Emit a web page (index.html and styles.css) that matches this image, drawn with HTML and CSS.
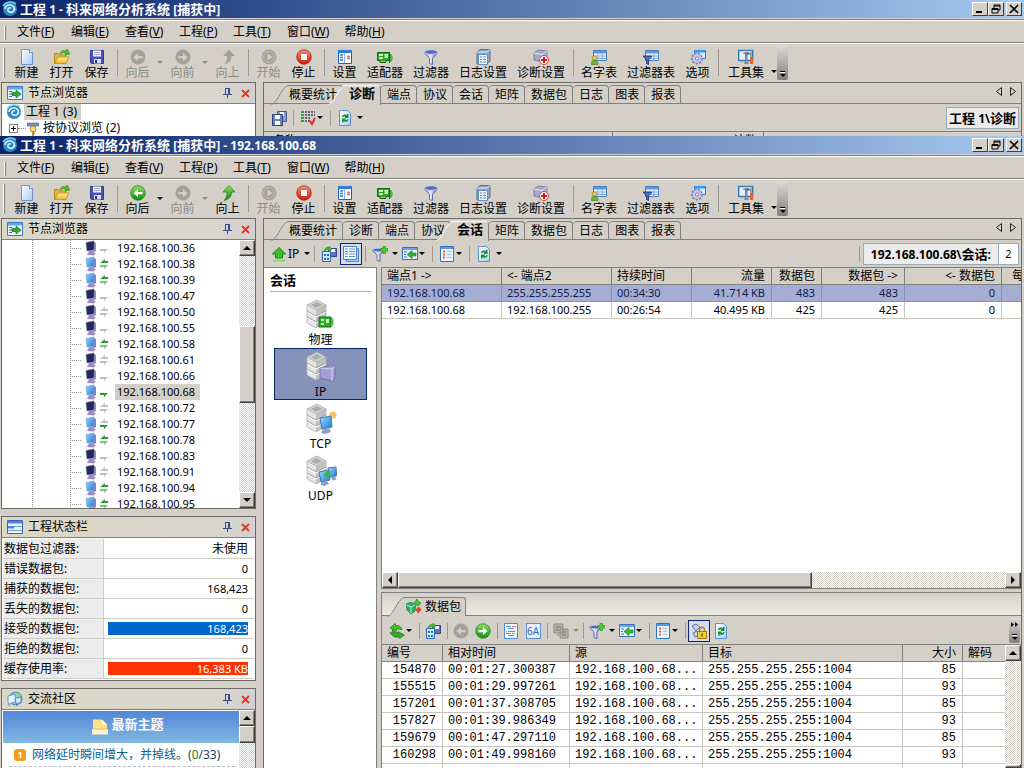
FILE: index.html
```html
<!DOCTYPE html>
<html lang="zh-CN">
<head>
<meta charset="utf-8">
<title>工程 1 - 科来网络分析系统</title>
<link rel="stylesheet" href="styles.css">
</head>
<body>
<svg class="defs" width="0" height="0" aria-hidden="true">
  <defs>
    <linearGradient id="gBlue" x2="1" y2="1"><stop offset="0" stop-color="#9fdcff"/><stop offset="1" stop-color="#1a78d0"/></linearGradient>
    <linearGradient id="gGreen" x2="0" y2="1"><stop offset="0" stop-color="#8fe060"/><stop offset="1" stop-color="#108a10"/></linearGradient>
    <linearGradient id="gPage" x2="1" y2="1"><stop offset="0" stop-color="#fff"/><stop offset="1" stop-color="#a9cdf5"/></linearGradient>
    <linearGradient id="gGold" x2="0" y2="1"><stop offset="0" stop-color="#fff3a0"/><stop offset="1" stop-color="#f0b820"/></linearGradient>
    <linearGradient id="gFun" x2="1" y2="0"><stop offset="0" stop-color="#6f86c4"/><stop offset=".45" stop-color="#eef2ff"/><stop offset="1" stop-color="#4a5fa8"/></linearGradient>
    <linearGradient id="gRed" x2="0" y2="1"><stop offset="0" stop-color="#f98a70"/><stop offset="1" stop-color="#c81e08"/></linearGradient>
  </defs>
  <symbol id="logo" viewBox="0 0 16 16"><circle cx="8" cy="8" r="7" fill="#2b86c8"/><path d="M3 8c0-4 6-6 9-2 2 4-3 7-6 4-1-2 1-4 3-3" fill="none" stroke="#d8f4ff" stroke-width="1.6"/><path d="M1 5C4 0 11 0 14 3" fill="none" stroke="#7ed0f5" stroke-width="1.4"/></symbol>
  <symbol id="new" viewBox="0 0 16 16"><path d="M2.500.5h8l3 3v12h-11z" fill="url(#gPage)" stroke="#6f93c8"/><path d="M10.500.5v3h3" fill="#fff" stroke="#6f93c8"/></symbol>
  <symbol id="open" viewBox="0 0 16 16"><path d="M.5 14.500v-10h4l1 1.500h6v8.500z" fill="#e6b93c" stroke="#b88a20"/><path d="M1 14.500l3-6.500h11l-3 6.500z" fill="url(#gGold)" stroke="#c79a28"/><path d="M6 5c1-4 4-4 6-3l1-2 3 5-5 1 .5-2c-2-1-3-.5-5.500 1z" fill="#4dbb25" stroke="#2a8a18" stroke-width=".6"/></symbol>
  <symbol id="save" viewBox="0 0 16 16"><path d="M1.500 1.500h13v13h-12l-1-1z" fill="#4a54b8" stroke="#323a90"/><path d="M4 1.500h8v6H4z" fill="#f6f7ff"/><path d="M5 3.500h6M5 5.500h6" stroke="#9aa4d8"/><path d="M5 10h7v4.500H5z" fill="#d8def4"/><path d="M6 11h2v3H6z" fill="#323a90"/></symbol>
  <symbol id="back" viewBox="0 0 16 16"><circle cx="8" cy="8" r="7.300" fill="url(#gGreen)" stroke="#2d8a28" stroke-width=".8"/><path d="M12.500 7H8V4L3.500 8.200 8 12V9.300h4.500z" fill="#fff"/></symbol>
  <symbol id="fwd" viewBox="0 0 16 16"><circle cx="8" cy="8" r="7.300" fill="url(#gGreen)" stroke="#2d8a28" stroke-width=".8"/><path d="M3.500 7H8V4l4.500 4.200L8 12V9.300H3.500z" fill="#fff"/></symbol>
  <symbol id="backoff" viewBox="0 0 16 16"><circle cx="8" cy="8" r="7.500" fill="#a3a19c"/><path d="M12.500 7H8V4L3.500 8.200 8 12V9.300h4.500z" fill="#d4d0c8"/></symbol>
  <symbol id="fwdoff" viewBox="0 0 16 16"><circle cx="8" cy="8" r="7.500" fill="#a3a19c"/><path d="M3.500 7H8V4l4.500 4.200L8 12V9.300H3.500z" fill="#d4d0c8"/></symbol>
  <symbol id="upon" viewBox="0 0 16 16"><path d="M9 .5l6 6.500h-3.500c0 4-1.500 7-7.500 8.500 3-3 3-5 3-8.500H3z" fill="url(#gGreen)" stroke="#187a18" stroke-width=".7"/></symbol>
  <symbol id="upoff" viewBox="0 0 16 16"><path d="M9 .5l6 6.500h-3.500c0 4-1.500 7-7.500 8.500 3-3 3-5 3-8.500H3z" fill="#a3a19c"/></symbol>
  <symbol id="startoff" viewBox="0 0 16 16"><circle cx="8" cy="8" r="7.500" fill="#a3a19c"/><circle cx="8" cy="8" r="5.500" fill="none" stroke="#c4c1ba"/><path d="M6.500 4.500v7l5-3.500z" fill="#d4d0c8"/></symbol>
  <symbol id="stop" viewBox="0 0 16 16"><circle cx="8" cy="8" r="7.300" fill="url(#gRed)" stroke="#b83018" stroke-width=".8"/><path d="M5 5h6v6H5z" fill="#fff"/></symbol>
  <symbol id="settings" viewBox="0 0 16 16"><path d="M1.500 1.500h13v13h-13z" fill="#fff" stroke="#1c5fc0"/><path d="M1 1h14v3H1z" fill="#2e7be0"/><path d="M3 6h3M3 8.500h3M3 11h3" stroke="#2e7be0" stroke-width="1.500"/><path d="M7.500 4v10" stroke="#8ab4ea"/><path d="M10 6h3v5h-3z" fill="#e8ccd8"/><path d="M10.500 7l2 3M12.500 7l-2 3" stroke="#d05070"/></symbol>
  <symbol id="adapter" viewBox="0 0 16 16"><path d="M.5 3.500h12v8H.5z" fill="#27a32d" stroke="#0d6d18"/><path d="M2 5h4v2H2zM2 8h4v2H2zM7.500 5h3.500v4H7.500z" fill="#d8f5a8"/><path d="M12.500 3v11M3 11.500v2h6v-2" stroke="#0d6d18" fill="#c8b840"/><path d="M13 5c3 1 3 6 0 8z" fill="#58c848" stroke="#187a18" stroke-width=".6"/></symbol>
  <symbol id="filter" viewBox="0 0 16 16"><path d="M1.500 3c0 2 4 4.500 5 6.500v5l3 1v-6c1-2 5-4.500 5-6.500z" fill="url(#gFun)" stroke="#46569a" stroke-width=".8"/><ellipse cx="8" cy="3" rx="6.500" ry="2.200" fill="#5368b8" stroke="#c8d0f0" stroke-width=".9"/></symbol>
  <symbol id="log" viewBox="0 0 16 16"><path d="M2 3l3-2.500h10V12l-3 3H2z" fill="#91a3bd" stroke="#5d7190"/><path d="M2 3h10l3-2.500" fill="none" stroke="#e8eef8"/><path d="M3.500 5.500h9v10h-9z" fill="#f1f8ff" stroke="#5a90c8"/><path d="M5 8h2M8 8h3M5 10.500h2M8 10.500h3M5 13h2M8 13h3" stroke="#3a8ad0"/></symbol>
  <symbol id="diag" viewBox="0 0 16 16"><path d="M1 4l4-3 9 1v8l-5 3-8-2z" fill="#a9acc8" stroke="#7c80a4"/><path d="M1 4l8 1.500L14 2M9 5.500V13" stroke="#e4e6f4" fill="none"/><circle cx="11" cy="11" r="4.500" fill="#fff" stroke="#d84040"/><path d="M11 8v6M8 11h6" stroke="#d81818" stroke-width="2"/></symbol>
  <symbol id="names" viewBox="0 0 16 16"><path d="M2.500 1.500h13v10h-13z" fill="#eef6ff" stroke="#4a80c0"/><path d="M3 2h12v2.500H3z" fill="#5c97e0"/><path d="M3 7h12M3 9.500h12M7 4.500v7M11 4.500v7" stroke="#78a8dc"/><circle cx="3.500" cy="9" r="2.300" fill="#e8c860" stroke="#9a7a20" stroke-width=".6"/><path d="M0 15.500c0-6 7-6 7 0z" fill="#6cb432" stroke="#3a7a18" stroke-width=".6"/></symbol>
  <symbol id="ftable" viewBox="0 0 16 16"><path d="M2.500 1.500h13v10h-13z" fill="#eef6ff" stroke="#4a80c0"/><path d="M3 2h12v2.500H3z" fill="#5c97e0"/><path d="M3 7h12M3 9.500h12M11 4.500v7" stroke="#78a8dc"/><path d="M0 7h9l-3.500 4v4.500l-2-1V11z" fill="#4c68c8" stroke="#20306e" stroke-width=".8"/></symbol>
  <symbol id="options" viewBox="0 0 16 16"><path d="M4.500 1.500h11v8h-11z" fill="#d8ecff" stroke="#2e7be0"/><path d="M5 1h10v2.500H5z" fill="#2e9af0"/><circle cx="7" cy="9.500" r="5" fill="#c9c4e6" stroke="#7c78b0" stroke-width="1.800" stroke-dasharray="2.200 1.200"/><circle cx="7" cy="9.500" r="4.300" fill="#c9c4e6"/><circle cx="7" cy="9.500" r="1.700" fill="#fff" stroke="#7c78b0"/></symbol>
  <symbol id="tools" viewBox="0 0 16 16"><path d="M.7 1.500h14v10H.7z" fill="#e4f2ff" stroke="#3a78b0" stroke-width="1.400"/><path d="M6 13h5v2H6z" fill="#8aa"/><path d="M4 4l6-1 3 2-3 1z" fill="#5d6f7e"/><path d="M7 5h2.500v10H7z" fill="#788898"/><path d="M13 3v5" stroke="#789" stroke-width="1.500"/><path d="M12 8h3v7h-3z" fill="#e8642c"/></symbol>
  <symbol id="nodes" viewBox="0 0 16 16"><path d="M.5 1.500h15v13H.5z" fill="#eef7ff" stroke="#3a78c8"/><path d="M1 2h14v2.500H1z" fill="#5ca8ee"/><path d="M2 6.500h3M2 9h3M2 11.500h3" stroke="#2e6fb8"/><path d="M5 7.500h4V5l5 4-5 4v-2.500H5z" fill="#35a83a" stroke="#12701a" stroke-width=".7"/></symbol>
  <symbol id="status" viewBox="0 0 16 16"><path d="M.5 1.500h15v13H.5z" fill="#eef6ff" stroke="#3466b8"/><path d="M1 2h14v2.500H1zM1 7h6v2.500H1z" fill="#4e86de"/><path d="M1 11.500h14M7 7.500h8" stroke="#6f9fe2"/></symbol>
  <symbol id="forum" viewBox="0 0 16 16"><circle cx="8.500" cy="7.500" r="6.500" fill="#93d49a" stroke="#4a90b8"/><path d="M1 5l7-2 1 8-5 1-2 3v-3H1z" fill="#e8f6ff" stroke="#5a9cc8"/><path d="M8 7l6-1v6h-3l-1 3-1-3z" fill="#cfe8ff" stroke="#4a88c8"/></symbol>
  <symbol id="pin" viewBox="0 0 9 10"><path d="M2.500 1v5M6.500 1v5M2 .5h5M0 6.500h9M4.500 7v3M5.500 1v5" stroke="#3b4e8a" fill="none"/></symbol>
  <symbol id="close" viewBox="0 0 9 9"><path d="M1 1l7 7M8 1l-7 7" stroke="#dc3a14" stroke-width="1.800"/></symbol>
  <symbol id="copyset" viewBox="0 0 16 16"><path d="M6.500 1.500h9v10h-9z" fill="#8a9ccc" stroke="#465a98"/><path d="M9 2h4v4H9z" fill="#fff"/><path d="M1.500 4.500h10v11h-10z" fill="#6d80b8" stroke="#2e4080"/><path d="M4 5h5v4H4zM4 11h5v4H4z" fill="#f4f8ff"/></symbol>
  <symbol id="checks" viewBox="0 0 16 16"><path d="M1 2h3M1 5h3M1 8h3M1 11h3" stroke="#3a9a4a" stroke-width="1.800"/><path d="M5 2h10M5 5h10M5 8h6M5 11h4" stroke="#446" stroke-width="1.300" stroke-dasharray="2 1"/><path d="M9 10l3 4 3-6" fill="none" stroke="#d83030" stroke-width="2"/></symbol>
  <symbol id="refresh" viewBox="0 0 16 16"><path d="M2.500.5h8l3 3v12h-11z" fill="url(#gPage)" stroke="#5f8fd0"/><path d="M5 7c0-3 4-3 5-1.500V4h1.500v4H8V6.800c-1-.8-1.500-.5-1.700.2zM11.500 9c0 3-4 3.500-5 2v1.500H5v-4h3.500v1.200c1 .8 1.500.3 1.700-.5z" fill="#12962a"/></symbol>
  <symbol id="upgreen" viewBox="0 0 16 16"><path d="M8 1.500l6.500 6.500h-3v4h-7V8h-3z" fill="#3fbf2c" stroke="#18801a"/><path d="M2 14.500h12" stroke="#7fcf70" stroke-width="1.500"/></symbol>
  <symbol id="export" viewBox="0 0 16 16"><path d="M7.500 2.500h8v8h-8z" fill="#6270c0" stroke="#39458e"/><path d="M10 3h4v3h-4z" fill="#fff"/><path d="M1.500 5.500h8v10h-8z" fill="#d4eaff" stroke="#2c68b8"/><path d="M3 8h2v2H3zM6 8h2v2H6zM3 12h2v2H3zM6 12h2v2H6z" fill="#2c68b8"/><path d="M3 5c1-4 4-4 5-3.500V0l3 3-3 3V4C6 3.500 5 4 3 5z" fill="#42b830" stroke="#1c801c" stroke-width=".5"/></symbol>
  <symbol id="list" viewBox="0 0 16 16"><path d="M3.500 2.500h12v13h-12z" fill="#b8d4f4" stroke="#4a80c8"/><path d="M.5.500h13v13H.5z" fill="#f8fcff" stroke="#4a80c8"/><path d="M2 3h10M2 5.500h10M2 8h10M2 10.500h10" stroke="#5b90d8"/><path d="M5.500 2v10" stroke="#f8fcff"/></symbol>
  <symbol id="fplus" viewBox="0 0 16 16"><path d="M.5 4c0 2 4 3.500 4.500 5v5.500l3 1V9c.5-1.500 4-3 4-5z" fill="url(#gFun)" stroke="#46569a" stroke-width=".8"/><ellipse cx="6.500" cy="4" rx="5.800" ry="1.800" fill="#5368b8" stroke="#c8d0f0" stroke-width=".8"/><path d="M11 0h2.500v2.500H16V5h-2.500v2.500H11V5H8.500V2.500H11z" fill="#4ccc2c" stroke="#1c8a1c" stroke-width=".6"/></symbol>
  <symbol id="locate" viewBox="0 0 16 16"><path d="M.5 1.500h15v12H.5z" fill="#eaf4ff" stroke="#3a6fb8"/><path d="M1 2h14v2H1z" fill="#6aa4e8"/><path d="M2 6h3M2 8.500h2M2 11h3" stroke="#2e6fb8"/><path d="M14 7h-4V4.500L5 8.500l5 4V10h4z" fill="#35b83a" stroke="#12701a" stroke-width=".6"/></symbol>
  <symbol id="columns" viewBox="0 0 16 16"><path d="M1.500.5h13v15h-13z" fill="#f4f9ff" stroke="#2f6fc8"/><path d="M2 1h12v2H2z" fill="#5c97e0"/><path d="M4 5.500h2M4 8.500h2M4 11.500h2" stroke="#e86040" stroke-width="1.800"/><path d="M7.500 5.500h5M7.500 8.500h5M7.500 11.500h5" stroke="#a8c8ec" stroke-width="1.500"/></symbol>
  <symbol id="swap" viewBox="0 0 16 16"><path d="M1 5l5-4.500 1 2c3 0 5 1 6 4l-3-.5-3 0 .5 2z" fill="#4cc030" stroke="#157a18" stroke-width=".7"/><path d="M15.500 12l-5 3.500-.5-1.500c-4 1-7-1-9-4.500l3 .5-1-3 6 3 0-1.500z" fill="#38a828" stroke="#157a18" stroke-width=".7"/></symbol>
  <symbol id="decode" viewBox="0 0 16 16"><path d="M1.500.5h13v15h-13z" fill="#f4f9ff" stroke="#4a88d8"/><path d="M3 3.500h5M5 5.500h6M5 8.500h7M3 10.500h5M5 12.500h6" stroke="#5a8ad0"/><path d="M9 3.500h4M3 8.500h1M9 10.500h3" stroke="#e07080"/></symbol>
  <symbol id="hexoff" viewBox="0 0 16 16"><path d="M1 1h9v9H1zM7 6h8v9H7z" fill="#b5b2ac" stroke="#8e8c86"/><path d="M3 4h5M3 7h3M9 9h4M9 12h4M4 12h2" stroke="#77756f"/></symbol>
  <symbol id="lock" viewBox="0 0 16 16"><path d="M1 3l4-2 4 3-4 4zM2 10l4-2 2 4-4 2z" fill="#c9d2ea" stroke="#6070a8"/><path d="M8.500 9V6.500c0-3 5-3 5 0V9" fill="none" stroke="#a88a18" stroke-width="1.500"/><path d="M6.500 8.500h9v7h-9z" fill="#f4cf38" stroke="#a07c10"/><path d="M11 10.500v3" stroke="#6a4e08" stroke-width="1.500"/></symbol>
  <symbol id="packets" viewBox="0 0 16 16"><path d="M8 4l3-4 1.500 2.500L15 4l-3 3z" fill="#48c038" stroke="#17801c" stroke-width=".6"/><path d="M0 5l5-2 5 3-1 6-4 3-4-4z" fill="#2fae5c" stroke="#17703c" stroke-width=".6"/><path d="M1 6l4 2 4-2M5 8v6" stroke="#b6f0ff" fill="none"/><path d="M12.500 7.500l3 3-3 4-3-3.500z" fill="#e8402c"/></symbol>
  <symbol id="proto" viewBox="0 0 12 16"><path d="M0 3h12v3H0z" fill="#7795cc" stroke="#405c98" stroke-width=".6"/><circle cx="6" cy="9" r="3" fill="#f8e070" stroke="#a88820"/><path d="M6 11v5M6 13.500h2" stroke="#a88820" stroke-width="1.600"/></symbol>
  <symbol id="pcon" viewBox="0 0 12 16"><path d="M9 2l2 1v8l-3 2z" fill="#8f7fc0"/><path d="M1 2.500l8-1.500v9l-7 1z" fill="url(#gBlue)" stroke="#5f9fd8" stroke-width=".6"/><path d="M4 11l4-1 1 3h2l-2 2.500-7-.5z" fill="#a08cc8"/></symbol>
  <symbol id="pcoff" viewBox="0 0 12 16"><path d="M9 2l2 1v8l-3 2z" fill="#8f8fc0"/><path d="M1 2.500l8-1.500v9l-7 1z" fill="#26265e" stroke="#6a70a8" stroke-width=".6"/><path d="M4 11l4-1 1 3h2l-2 2.500-7-.5z" fill="#a08cc8"/></symbol>
  <symbol id="au" viewBox="0 0 10 12"><path d="M1 5l5-4v2h3v2z"/></symbol>
  <symbol id="ad" viewBox="0 0 10 12"><path d="M9 1L5 5V3H1V1z"/></symbol>
  <symbol id="server" viewBox="0 0 22 30"><path d="M1 6l9 5v18l-9-5z" fill="#e6e6e6"/><path d="M10 11l10-5v18l-10 5z" fill="#c0c0c0"/><path d="M1 6l10-5 9 5-10 5z" fill="#d4d4d4" stroke="#aaa" stroke-width=".8"/><path d="M5 6l6-3 5 3-6 3z" fill="#ababab"/><path d="M1 12l9 5 10-5M1 18l9 5 10-5" fill="none" stroke="#999"/><path d="M1 13l9 5 10-5M1 19l9 5 10-5" fill="none" stroke="#fff"/><path d="M1 6v18l9 5 10-5V6" fill="none" stroke="#b4b4b4" stroke-width=".8"/></symbol>
  <symbol id="sphy" viewBox="0 0 32 32"><use href="#server" x="1" y="0" width="22" height="30"/><path d="M14 18h12v10H14z" fill="#2cae30" stroke="#126a18"/><path d="M16 20h3v2h-3zM16 24h3v2h-3zM21 20h3v4h-3z" fill="#c8f4a8"/><path d="M26 18c4 1 3 9 0 10z" fill="#56b846"/></symbol>
  <symbol id="sip" viewBox="0 0 32 32"><use href="#server" x="1" y="0" width="22" height="30"/><path d="M15 17l12-3 3 2v11l-3 3-12-3z" fill="#a39fd4" stroke="#6966a8" stroke-width=".8"/><path d="M15 17l12 1v12M27 18l3-2" fill="none" stroke="#d4d2f0"/></symbol>
  <symbol id="stcp" viewBox="0 0 32 32"><use href="#server" x="1" y="0" width="22" height="30"/><circle cx="28" cy="12" r="3.500" fill="#f0c668"/><path d="M15 15l11-2 1 11-10 2z" fill="url(#gBlue)" stroke="#4a7ab0"/><path d="M18 26l6-1 2 4-6 2-4-1z" fill="#8fa0c8"/></symbol>
  <symbol id="sudp" viewBox="0 0 32 32"><use href="#server" x="1" y="0" width="22" height="30"/><path d="M23 13l8-1 .5 9-7 1z" fill="url(#gBlue)" stroke="#4a7ab0"/><path d="M14 17l10-2 1 10-9 2z" fill="url(#gBlue)" stroke="#4a7ab0"/><path d="M16 27l6-1 2 3-5 2-3-1zM26 22l4-.5 1.500 3-4 1z" fill="#8fa0c8"/><path d="M19 19l4-3 3 3-4 4z" fill="#3cb82c"/></symbol>
  <symbol id="doc" viewBox="0 0 16 16"><path d="M1 .5h9l5 5V15H1z" fill="#ffe08c"/><path d="M10 .5v5h5" fill="#fff6d0"/><path d="M0 10h16v5.500H0z" fill="#fff4cf"/><path d="M1 10h14" stroke="#f0b848"/></symbol>
</svg>

<div class="desktop">
<section class="window window--back">
  <header class="titlebar"><svg class="i16"><use href="#logo"/></svg><h1>工程<span class="lat"> 1 - </span>科来网络分析系统<span class="lat"> [</span>捕获中<span class="lat">]</span></h1>
    <div class="winbtns"><button aria-label="最小化"><svg viewBox="0 0 12 10"><path d="M2 8h6" stroke="#000" stroke-width="2"/></svg></button><button aria-label="还原"><svg viewBox="0 0 12 10"><path d="M4 1h6v5H8M4 1v3M4 2h6M2 4.500h6V9H2zM2 5.500h6" fill="none" stroke="#000"/></svg></button><button aria-label="关闭"><svg viewBox="0 0 12 10"><path d="M2 1l8 8M10 1L2 9" stroke="#000" stroke-width="1.600"/></svg></button></div>
  </header>
  <nav class="menubar"><button>文件(<u>F</u>)</button><button>编辑(<u>E</u>)</button><button>查看(<u>V</u>)</button><button>工程(<u>P</u>)</button><button>工具(<u>T</u>)</button><button>窗口(<u>W</u>)</button><button>帮助(<u>H</u>)</button></nav>
  <div class="toolbar">
    <button class="tool"><svg class="i16"><use href="#new"/></svg>新建</button><button class="tool"><svg class="i16"><use href="#open"/></svg>打开</button><button class="tool"><svg class="i16"><use href="#save"/></svg>保存</button><i class="vsep"></i>
    <button class="tool" disabled><svg class="i16"><use href="#backoff"/></svg>向后</button><button class="drop" aria-label="向后列表" disabled></button><button class="tool" disabled><svg class="i16"><use href="#fwdoff"/></svg>向前</button><button class="drop" aria-label="向前列表" disabled></button><button class="tool" disabled><svg class="i16"><use href="#upoff"/></svg>向上</button><i class="vsep"></i>
    <button class="tool" disabled><svg class="i16"><use href="#startoff"/></svg>开始</button><button class="tool"><svg class="i16"><use href="#stop"/></svg>停止</button><i class="vsep"></i>
    <button class="tool"><svg class="i16"><use href="#settings"/></svg>设置</button><button class="tool"><svg class="i16"><use href="#adapter"/></svg>适配器</button><button class="tool"><svg class="i16"><use href="#filter"/></svg>过滤器</button><button class="tool"><svg class="i16"><use href="#log"/></svg>日志设置</button><button class="tool"><svg class="i16"><use href="#diag"/></svg>诊断设置</button><i class="vsep"></i>
    <button class="tool"><svg class="i16"><use href="#names"/></svg>名字表</button><button class="tool"><svg class="i16"><use href="#ftable"/></svg>过滤器表</button><button class="tool"><svg class="i16"><use href="#options"/></svg>选项</button><i class="vsep"></i>
    <button class="tool tool--wide"><svg class="i16"><use href="#tools"/></svg>工具集</button><button class="drop drop--thin" aria-label="工具集列表"></button><button class="overflow" aria-label="更多按钮"></button>
  </div>
  <div class="workspace">
    <aside class="dock">
      <section class="panel">
        <header class="caption"><svg class="i16"><use href="#nodes"/></svg><h2>节点浏览器</h2><button aria-label="固定"><svg class="pin"><use href="#pin"/></svg></button><button aria-label="关闭"><svg class="x"><use href="#close"/></svg></button></header>
        <ul class="roots">
          <li><svg class="i16"><use href="#logo"/></svg><span class="hot">工程 1 (3)</span></li>
          <li><i class="plus"></i><i class="dots"></i><svg class="i12"><use href="#proto"/></svg><span>按协议浏览 (2)</span></li>
        </ul>
      </section>
    </aside>
    <main class="view">
      <div class="tabs"><button class="tab tab--first"><svg class="slant" viewBox="0 0 18 20"><path d="M.5 19.500C6 18 10 5 14 2.500Q15 .5 18 .5" fill="none" stroke="#808080"/></svg>概要统计</button><button class="tab is-active"><svg class="slant" viewBox="0 0 18 20"><path d="M0 20C6 18 10 5 14 2.500Q15 .5 18 .5V20z" fill="#d4d0c8"/><path d="M.5 19.500C6 18 10 5 14 2.500Q15 .5 18 .5" fill="none" stroke="#fff"/></svg>诊断</button><button class="tab">端点</button><button class="tab">协议</button><button class="tab">会话</button><button class="tab">矩阵</button><button class="tab">数据包</button><button class="tab">日志</button><button class="tab">图表</button><button class="tab">报表</button>
        <div class="pager"><button aria-label="向左"><svg viewBox="0 0 6 9"><path d="M5.500.5v8L.5 4.500z" fill="none" stroke="#222"/></svg></button><button aria-label="向右"><svg viewBox="0 0 6 9"><path d="M.5.500v8l5-4z" fill="none" stroke="#222"/></svg></button></div>
      </div>
      <div class="subbar"><button class="tb" aria-label="保存"><svg class="i16"><use href="#copyset"/></svg></button><i class="vsep"></i><button class="tb" aria-label="级别"><svg class="i16"><use href="#checks"/></svg></button><button class="drop drop--tight" aria-label="列表"></button><i class="vsep"></i><button class="tb" aria-label="刷新"><svg class="i16"><use href="#refresh"/></svg></button><button class="drop" aria-label="刷新间隔"></button>
        <div class="crumb"><b>工程<span class="lat"> 1\</span>诊断</b></div></div>
      <table class="grid grid--diag"><colgroup><col class="c-name"><col class="c-count"><col></colgroup><thead><tr><th>名称</th><th class="num">计数</th><th></th></tr></thead></table>
    </main>
  </div>
</section>

<section class="window window--front">
  <header class="titlebar"><svg class="i16"><use href="#logo"/></svg><h1>工程<span class="lat"> 1 - </span>科来网络分析系统<span class="lat"> [</span>捕获中<span class="lat">] - 192.168.100.68</span></h1>
    <div class="winbtns"><button aria-label="最小化"><svg viewBox="0 0 12 10"><path d="M2 8h6" stroke="#000" stroke-width="2"/></svg></button><button aria-label="还原"><svg viewBox="0 0 12 10"><path d="M4 1h6v5H8M4 1v3M4 2h6M2 4.500h6V9H2zM2 5.500h6" fill="none" stroke="#000"/></svg></button><button aria-label="关闭"><svg viewBox="0 0 12 10"><path d="M2 1l8 8M10 1L2 9" stroke="#000" stroke-width="1.600"/></svg></button></div>
  </header>
  <nav class="menubar"><button>文件(<u>F</u>)</button><button>编辑(<u>E</u>)</button><button>查看(<u>V</u>)</button><button>工程(<u>P</u>)</button><button>工具(<u>T</u>)</button><button>窗口(<u>W</u>)</button><button>帮助(<u>H</u>)</button></nav>
  <div class="toolbar">
    <button class="tool"><svg class="i16"><use href="#new"/></svg>新建</button><button class="tool"><svg class="i16"><use href="#open"/></svg>打开</button><button class="tool"><svg class="i16"><use href="#save"/></svg>保存</button><i class="vsep"></i>
    <button class="tool"><svg class="i16"><use href="#back"/></svg>向后</button><button class="drop" aria-label="向后列表"></button><button class="tool" disabled><svg class="i16"><use href="#fwdoff"/></svg>向前</button><button class="drop" aria-label="向前列表" disabled></button><button class="tool"><svg class="i16"><use href="#upon"/></svg>向上</button><i class="vsep"></i>
    <button class="tool" disabled><svg class="i16"><use href="#startoff"/></svg>开始</button><button class="tool"><svg class="i16"><use href="#stop"/></svg>停止</button><i class="vsep"></i>
    <button class="tool"><svg class="i16"><use href="#settings"/></svg>设置</button><button class="tool"><svg class="i16"><use href="#adapter"/></svg>适配器</button><button class="tool"><svg class="i16"><use href="#filter"/></svg>过滤器</button><button class="tool"><svg class="i16"><use href="#log"/></svg>日志设置</button><button class="tool"><svg class="i16"><use href="#diag"/></svg>诊断设置</button><i class="vsep"></i>
    <button class="tool"><svg class="i16"><use href="#names"/></svg>名字表</button><button class="tool"><svg class="i16"><use href="#ftable"/></svg>过滤器表</button><button class="tool"><svg class="i16"><use href="#options"/></svg>选项</button><i class="vsep"></i>
    <button class="tool tool--wide"><svg class="i16"><use href="#tools"/></svg>工具集</button><button class="drop drop--thin" aria-label="工具集列表"></button><button class="overflow" aria-label="更多按钮"></button>
  </div>
  <div class="workspace">
    <aside class="dock">
      <section class="panel panel--grow">
        <header class="caption"><svg class="i16"><use href="#nodes"/></svg><h2>节点浏览器</h2><button aria-label="固定"><svg class="pin"><use href="#pin"/></svg></button><button aria-label="关闭"><svg class="x"><use href="#close"/></svg></button></header>
        <div class="scrollbox">
          <ul class="hosts">
            <li><svg class="i12"><use href="#pcoff"/></svg><svg class="io"><use class="none" href="#au"/><use class="dim" href="#ad" y="6"/></svg><span>192.168.100.36</span></li>
            <li><svg class="i12"><use href="#pcon"/></svg><svg class="io"><use class="lit" href="#au"/><use class="mid" href="#ad" y="6"/></svg><span>192.168.100.38</span></li>
            <li><svg class="i12"><use href="#pcon"/></svg><svg class="io"><use class="lit" href="#au"/><use class="mid" href="#ad" y="6"/></svg><span>192.168.100.39</span></li>
            <li><svg class="i12"><use href="#pcoff"/></svg><svg class="io"><use class="none" href="#au"/><use class="dim" href="#ad" y="6"/></svg><span>192.168.100.47</span></li>
            <li><svg class="i12"><use href="#pcoff"/></svg><svg class="io"><use class="dim" href="#au"/><use class="dim" href="#ad" y="6"/></svg><span>192.168.100.50</span></li>
            <li><svg class="i12"><use href="#pcoff"/></svg><svg class="io"><use class="none" href="#au"/><use class="dim" href="#ad" y="6"/></svg><span>192.168.100.55</span></li>
            <li><svg class="i12"><use href="#pcon"/></svg><svg class="io"><use class="lit" href="#au"/><use class="mid" href="#ad" y="6"/></svg><span>192.168.100.58</span></li>
            <li><svg class="i12"><use href="#pcoff"/></svg><svg class="io"><use class="dim" href="#au"/><use class="dim" href="#ad" y="6"/></svg><span>192.168.100.61</span></li>
            <li><svg class="i12"><use href="#pcoff"/></svg><svg class="io"><use class="none" href="#au"/><use class="dim" href="#ad" y="6"/></svg><span>192.168.100.66</span></li>
            <li><svg class="i12"><use href="#pcon"/></svg><svg class="io"><use class="none" href="#au"/><use class="lit" href="#ad" y="6"/></svg><span class="hot">192.168.100.68</span></li>
            <li><svg class="i12"><use href="#pcoff"/></svg><svg class="io"><use class="dim" href="#au"/><use class="dim" href="#ad" y="6"/></svg><span>192.168.100.72</span></li>
            <li><svg class="i12"><use href="#pcon"/></svg><svg class="io"><use class="dim" href="#au"/><use class="lit" href="#ad" y="6"/></svg><span>192.168.100.77</span></li>
            <li><svg class="i12"><use href="#pcon"/></svg><svg class="io"><use class="lit" href="#au"/><use class="mid" href="#ad" y="6"/></svg><span>192.168.100.78</span></li>
            <li><svg class="i12"><use href="#pcoff"/></svg><svg class="io"><use class="none" href="#au"/><use class="dim" href="#ad" y="6"/></svg><span>192.168.100.83</span></li>
            <li><svg class="i12"><use href="#pcoff"/></svg><svg class="io"><use class="dim" href="#au"/><use class="dim" href="#ad" y="6"/></svg><span>192.168.100.91</span></li>
            <li><svg class="i12"><use href="#pcon"/></svg><svg class="io"><use class="lit" href="#au"/><use class="mid" href="#ad" y="6"/></svg><span>192.168.100.94</span></li>
            <li><svg class="i12"><use href="#pcon"/></svg><svg class="io"><use class="lit" href="#au"/><use class="mid" href="#ad" y="6"/></svg><span>192.168.100.95</span></li>
          </ul>
          <div class="vscroll vscroll--tree"><button class="sb up" aria-label="向上滚动"></button><i class="gap-a"></i><i class="thumb"></i><i class="gap-b"></i><button class="sb down" aria-label="向下滚动"></button></div>
        </div>
      </section>
      <section class="panel">
        <header class="caption"><svg class="i16"><use href="#status"/></svg><h2>工程状态栏</h2><button aria-label="固定"><svg class="pin"><use href="#pin"/></svg></button><button aria-label="关闭"><svg class="x"><use href="#close"/></svg></button></header>
        <table class="facts">
          <tr><th>数据包过滤器:</th><td>未使用</td></tr>
          <tr><th>错误数据包:</th><td>0</td></tr>
          <tr><th>捕获的数据包:</th><td>168,423</td></tr>
          <tr><th>丢失的数据包:</th><td>0</td></tr>
          <tr><th>接受的数据包:</th><td><div class="meter meter--blue">168,423</div></td></tr>
          <tr><th>拒绝的数据包:</th><td>0</td></tr>
          <tr><th>缓存使用率:</th><td><div class="meter meter--red">16,383 KB</div></td></tr>
        </table>
      </section>
      <section class="panel panel--forum">
        <header class="caption"><svg class="i16"><use href="#forum"/></svg><h2>交流社区</h2><button aria-label="固定"><svg class="pin"><use href="#pin"/></svg></button><button aria-label="关闭"><svg class="x"><use href="#close"/></svg></button></header>
        <div class="scrollbox">
          <div class="forum"><h3><svg class="i16"><use href="#doc"/></svg>最新主题</h3>
            <p><b class="rank">1</b><a href="#topic">网络延时瞬间增大，并掉线。</a><span>(<em>0</em>/33)</span></p></div>
          <div class="vscroll"><button class="sb up" aria-label="向上滚动"></button><i class="thumb thumb--small"></i><i class="gap-b"></i></div>
        </div>
      </section>
    </aside>
    <main class="view">
      <div class="tabs"><button class="tab tab--first"><svg class="slant" viewBox="0 0 18 20"><path d="M.5 19.500C6 18 10 5 14 2.500Q15 .5 18 .5" fill="none" stroke="#808080"/></svg>概要统计</button><button class="tab">诊断</button><button class="tab">端点</button><button class="tab">协议</button><button class="tab is-active"><svg class="slant" viewBox="0 0 18 20"><path d="M0 20C6 18 10 5 14 2.500Q15 .5 18 .5V20z" fill="#d4d0c8"/><path d="M.5 19.500C6 18 10 5 14 2.500Q15 .5 18 .5" fill="none" stroke="#fff"/></svg>会话</button><button class="tab">矩阵</button><button class="tab">数据包</button><button class="tab">日志</button><button class="tab">图表</button><button class="tab">报表</button>
        <div class="pager"><button aria-label="向左"><svg viewBox="0 0 6 9"><path d="M5.500.5v8L.5 4.500z" fill="none" stroke="#222"/></svg></button><button aria-label="向右"><svg viewBox="0 0 6 9"><path d="M.5.500v8l5-4z" fill="none" stroke="#222"/></svg></button></div>
      </div>
      <div class="subbar"><button class="tb tb--text"><svg class="i16"><use href="#upgreen"/></svg>IP</button><button class="drop" aria-label="协议层"></button><i class="vsep"></i><button class="tb" aria-label="导出"><svg class="i16"><use href="#export"/></svg></button><button class="tb is-on" aria-label="列表"><svg class="i16"><use href="#list"/></svg></button><i class="vsep"></i><button class="tb" aria-label="添加过滤器"><svg class="i16"><use href="#fplus"/></svg></button><button class="drop" aria-label="过滤器列表"></button><button class="tb" aria-label="定位"><svg class="i16"><use href="#locate"/></svg></button><button class="drop drop--tight" aria-label="定位列表"></button><i class="vsep"></i><button class="tb" aria-label="显示列"><svg class="i16"><use href="#columns"/></svg></button><button class="drop drop--tight" aria-label="列选项"></button><i class="vsep"></i><button class="tb" aria-label="刷新"><svg class="i16"><use href="#refresh"/></svg></button><button class="drop" aria-label="刷新间隔"></button>
        <i class="vsep vsep--end"></i><div class="crumb"><b><span class="lat">192.168.100.68\</span>会话<span class="lat">:</span></b><span class="count">2</span></div></div>
      <div class="split">
        <nav class="layers"><h2>会话</h2>
          <button><svg class="i32"><use href="#sphy"/></svg>物理</button>
          <button class="is-active"><svg class="i32"><use href="#sip"/></svg>IP</button>
          <button><svg class="i32"><use href="#stcp"/></svg>TCP</button>
          <button><svg class="i32"><use href="#sudp"/></svg>UDP</button>
        </nav>
        <div class="data">
          <section class="upper">
            <div class="gridbox">
            <table class="grid grid--conv"><colgroup><col class="w1"><col class="w2"><col class="w3"><col class="w4"><col class="w5"><col class="w6"><col class="w7"><col></colgroup>
              <thead><tr><th>端点1 -&gt;</th><th>&lt;- 端点2</th><th>持续时间</th><th class="num">流量</th><th class="num">数据包</th><th class="num">数据包 -&gt;</th><th class="num">&lt;- 数据包</th><th class="cut">每</th></tr></thead>
              <tbody><tr class="is-selected"><td>192.168.100.68</td><td>255.255.255.255</td><td>00:34:30</td><td class="num">41.714 KB</td><td class="num">483</td><td class="num">483</td><td class="num">0</td><td></td></tr>
              <tr><td>192.168.100.68</td><td>192.168.100.255</td><td>00:26:54</td><td class="num">40.495 KB</td><td class="num">425</td><td class="num">425</td><td class="num">0</td><td></td></tr></tbody></table>
            </div>
            <div class="hscroll"><button class="sb left" aria-label="向左滚动"></button><i class="thumb"></i><i class="gap"></i><button class="sb right" aria-label="向右滚动"></button></div>
          </section>
          <section class="lower">
            <div class="packet-tabs"><button><svg class="slant" viewBox="0 0 18 20"><path d="M0 20C6 18 10 5 14 2.500Q15 .5 18 .5V20z" fill="#d4d0c8"/><path d="M.5 19.500C6 18 10 5 14 2.500Q15 .5 18 .5" fill="none" stroke="#808080"/></svg><svg class="i16"><use href="#packets"/></svg>数据包</button></div>
            <div class="subbar subbar--packets"><button class="tb" aria-label="方向"><svg class="i16"><use href="#swap"/></svg></button><button class="drop drop--tight" aria-label="方向列表"></button><i class="vsep"></i><button class="tb" aria-label="导出"><svg class="i16"><use href="#export"/></svg></button><i class="vsep"></i><button class="tb" aria-label="上一个" disabled><svg class="i16"><use href="#backoff"/></svg></button><button class="tb" aria-label="下一个"><svg class="i16"><use href="#fwd"/></svg></button><i class="vsep"></i><button class="tb" aria-label="解码"><svg class="i16"><use href="#decode"/></svg></button><button class="tb"><span class="hex">6A</span></button><i class="vsep"></i><button class="tb" aria-label="布局" disabled><svg class="i16"><use href="#hexoff"/></svg></button><button class="drop" aria-label="布局列表" disabled></button><i class="vsep"></i><button class="tb" aria-label="添加过滤器"><svg class="i16"><use href="#fplus"/></svg></button><button class="drop" aria-label="过滤器列表"></button><button class="tb" aria-label="定位"><svg class="i16"><use href="#locate"/></svg></button><button class="drop drop--tight" aria-label="定位列表"></button><i class="vsep"></i><button class="tb" aria-label="显示列"><svg class="i16"><use href="#columns"/></svg></button><button class="drop drop--tight" aria-label="列选项"></button><i class="vsep"></i><button class="tb is-on" aria-label="锁定"><svg class="i16"><use href="#lock"/></svg></button><button class="tb" aria-label="刷新"><svg class="i16"><use href="#refresh"/></svg></button><button class="overflow overflow--more" aria-label="更多按钮"><svg viewBox="0 0 7 5"><path d="M0 0l3 2.500L0 5zM4 0l3 2.500L4 5z"/></svg></button></div>
            <div class="scrollbox">
              <div class="gridbox"><table class="grid grid--pkt"><colgroup><col class="p1"><col class="p2"><col class="p3"><col><col class="p5"><col class="p6"></colgroup>
                <thead><tr><th>编号</th><th>相对时间</th><th>源</th><th>目标</th><th class="num">大小</th><th>解码</th></tr></thead>
                <tbody>
                <tr><td class="num">154870</td><td>00:01:27.300387</td><td>192.168.100.68...</td><td>255.255.255.255:1004</td><td class="num">85</td><td></td></tr>
                <tr><td class="num">155515</td><td>00:01:29.997261</td><td>192.168.100.68...</td><td>255.255.255.255:1004</td><td class="num">93</td><td></td></tr>
                <tr><td class="num">157201</td><td>00:01:37.308705</td><td>192.168.100.68...</td><td>255.255.255.255:1004</td><td class="num">85</td><td></td></tr>
                <tr><td class="num">157827</td><td>00:01:39.986349</td><td>192.168.100.68...</td><td>255.255.255.255:1004</td><td class="num">93</td><td></td></tr>
                <tr><td class="num">159679</td><td>00:01:47.297110</td><td>192.168.100.68...</td><td>255.255.255.255:1004</td><td class="num">85</td><td></td></tr>
                <tr><td class="num">160298</td><td>00:01:49.998160</td><td>192.168.100.68...</td><td>255.255.255.255:1004</td><td class="num">93</td><td></td></tr>
                <tr><td></td><td></td><td></td><td></td><td></td><td></td></tr>
                </tbody></table></div>
              <div class="vscroll"><button class="sb up" aria-label="向上滚动"></button><i class="gap-b"></i><i class="thumb thumb--end"></i></div>
            </div>
          </section>
        </div>
      </div>
    </main>
  </div>
</section>
</div>
</body>
</html>
```
FILE: styles.css
```css
:root {
  --face: #d4d0c8;
  --shade: #808080;
  --line: #6e6c68;
}
* { box-sizing: border-box; }
body {
  margin: 0;
  background: var(--face);
  color: #000;
  font: 12px/16px "Noto Sans", "Noto Sans CJK SC", sans-serif;
}
button {
  margin: 0;
  padding: 0;
  border: 0;
  background: none;
  color: inherit;
  font: inherit;
  white-space: nowrap;
}
h1, h2, h3, p, ul { margin: 0; padding: 0; font-size: inherit; font-weight: normal; }
li { list-style: none; }
svg { display: block; flex: none; }
.defs { position: absolute; }
.i16 { width: 16px; height: 16px; }
.i12 { width: 12px; height: 16px; }
.i32 { width: 32px; height: 32px; }
.lat { font-family: "Open Sans", "Noto Sans", sans-serif; font-size: 12px; white-space: pre; }

.desktop { display: flex; flex-direction: column; height: 100vh; overflow: hidden; }
.window { display: flex; flex-direction: column; min-height: 0; overflow: hidden; background: var(--face); }
.window--back { flex: none; height: 136px; }
.window--front { flex: 1; }

/* Title bar */
.titlebar {
  display: flex;
  flex: none;
  align-items: center;
  gap: 2px;
  height: 19px;
  padding: 0 2px;
  background: linear-gradient(90deg, #0a246a, #a6caf0);
  border-bottom: 1px solid var(--face);
  color: #fff;
}
.titlebar h1 { flex: 1; font-size: 13px; font-weight: bold; line-height: 18px; white-space: nowrap; }
.winbtns { display: flex; color: #000; }
.winbtns button {
  width: 16px;
  height: 14px;
  padding: 1px;
  background: var(--face);
  border: 1px solid;
  border-color: #fff #404040 #404040 #fff;
}
.winbtns button:last-child { margin-left: 2px; }
.winbtns svg { width: 12px; height: 10px; }

/* Menu and main toolbar */
.menubar {
  display: flex;
  flex: none;
  align-items: center;
  gap: 15px;
  height: 24px;
  padding: 2px 0 0 17px;
  border-top: 1px solid var(--shade);
  border-bottom: 1px solid var(--shade);
  box-shadow: inset 0 1px #fff;
  background: linear-gradient(#fff, #fff) 4px 5px / 1px 15px no-repeat, linear-gradient(var(--shade), var(--shade)) 5px 5px / 1px 15px no-repeat;
}
.menubar button { min-width: 39px; text-align: left; }
.toolbar {
  display: flex;
  flex: none;
  height: 39px;
  padding: 1px 0 2px 9px;
  border-top: 1px solid #fff;
  background: linear-gradient(#fff, #fff) 3px 4px / 1px 30px no-repeat, linear-gradient(var(--shade), var(--shade)) 4px 4px / 1px 30px no-repeat;
}
.tool {
  display: flex;
  flex-direction: column;
  align-items: center;
  min-width: 35px;
  padding: 4px 5px 0;
  line-height: 15px;
}
.tool--wide { min-width: 50px; }
button:disabled { color: #8e8c86; }
.vsep { flex: none; align-self: stretch; width: 6px; margin: 4px 0; background: linear-gradient(#9c9993, #9c9993) 3px 0 / 1px 100% no-repeat; }
.drop { display: flex; align-items: center; justify-content: center; width: 10px; }
.drop::before { content: ""; border: 3px solid transparent; border-top-color: currentColor; border-bottom-width: 0; }
.toolbar .drop { align-self: center; height: 10px; }
.toolbar .drop--thin { width: 6px; align-self: flex-end; margin-bottom: 4px; }
.overflow {
  display: flex;
  flex-direction: column;
  align-items: center;
  justify-content: flex-end;
  width: 11px;
  padding-bottom: 3px;
  background: linear-gradient(#dedbd6, #808080);
  border-radius: 0 0 2px 2px;
}
.overflow::before { content: ""; width: 5px; height: 1px; margin-bottom: 2px; background: #000; box-shadow: 0 1px #fff; }
.overflow::after { content: ""; border: 3px solid transparent; border-top-color: #000; border-bottom-width: 0; }
.overflow svg { order: -1; width: 7px; height: 5px; margin: 4px 0 auto; }

/* Docked panels */
.workspace { display: flex; flex: 1; gap: 7px; min-height: 0; padding: 0 2px 0 1px; }
.dock { display: flex; flex: 0 0 255px; flex-direction: column; gap: 7px; min-height: 0; }
.panel { display: flex; flex: none; flex-direction: column; background: #fff; border: 1px solid var(--line); min-height: 0; }
.panel--grow { flex: 1; }
.window--back .panel, .panel--forum { border-bottom: 0; }
.caption {
  display: flex;
  flex: none;
  align-items: center;
  height: 21px;
  padding: 0 1px 0 5px;
  background: linear-gradient(90deg, #dcd8c8, #d9d6cc 85%, #d2d0d4);
  border-bottom: 1px solid var(--shade);
}
.caption h2 { flex: 1; margin-left: 5px; font-size: 12px; }
.caption button { width: 18px; display: flex; justify-content: center; }
.pin { width: 9px; height: 10px; }
.x { width: 9px; height: 9px; }
.hot { background: var(--face); }

.roots li { display: flex; align-items: center; height: 16px; padding-left: 4px; white-space: nowrap; }
.roots span { margin-left: 2px; padding: 0 4px 0 2px; }
.plus {
  width: 9px;
  height: 9px;
  margin-left: 3px;
  border: 1px solid var(--shade);
  background: linear-gradient(#000, #000) center / 5px 1px no-repeat, linear-gradient(#000, #000) center / 1px 5px no-repeat, #fff;
}
.dots { width: 8px; margin-right: 1px; border-top: 1px dotted var(--shade); }

.scrollbox { display: flex; flex: 1; min-height: 0; }
.hosts {
  flex: 1;
  min-width: 0;
  overflow: hidden;
  background: repeating-linear-gradient(#999 0 1px, #fff 1px 2px) 30px 0 / 1px 100% no-repeat, repeating-linear-gradient(#999 0 1px, #fff 1px 2px) 68px 0 / 1px 100% no-repeat;
}
.hosts li {
  display: flex;
  align-items: center;
  height: 16px;
  padding-left: 83px;
  font-size: 11px;
  background: repeating-linear-gradient(90deg, #999 0 1px, transparent 1px 2px) 70px 8px / 10px 1px no-repeat;
}
.hosts span { margin-left: 6px; padding: 0 5px 0 2px; }
.io { width: 10px; height: 12px; margin-left: 2px; }
.lit { fill: #2c9a2c; }
.mid { fill: #7fc07f; }
.dim { fill: #b8c4b8; }
.none { fill: none; }

/* Scroll bars */
.vscroll, .hscroll { display: flex; flex: none; background: repeating-conic-gradient(#fff 0 25%, var(--face) 0 50%) 0 0 / 2px 2px; }
.vscroll { flex-direction: column; width: 16px; }
.hscroll { height: 16px; }
.sb, .thumb { flex: none; background: var(--face); border: 1px solid; border-color: #fff #404040 #404040 #fff; box-shadow: inset -1px -1px var(--shade); }
.sb { display: flex; align-items: center; justify-content: center; width: 16px; height: 16px; }
.sb::before { content: ""; border: 4px solid transparent; }
.sb.up::before { border-bottom-color: #000; border-top-width: 0; }
.sb.down::before { border-top-color: #000; border-bottom-width: 0; }
.sb.left::before { border-right-color: #000; border-left-width: 0; }
.sb.right::before { border-left-color: #000; border-right-width: 0; }
.gap-a { flex: 68; }
.gap-b { flex: 87; }
.vscroll--tree .thumb { flex: 73; }
.thumb--small { height: 17px; }
.thumb--end { height: 4px; }
.hscroll .thumb { flex: 413; }
.hscroll .gap { flex: 194; }

/* Project status */
.facts { width: 100%; padding: 1px; border-collapse: separate; border-spacing: 0; }
.facts th, .facts td { height: 20px; padding: 0 2px; border-bottom: 1px solid #cfccc4; line-height: 18px; }
.facts th { width: 100px; background: #ececec; font-weight: normal; text-align: left; white-space: nowrap; padding: 0 1px; }
.facts td { padding: 0 6px 0 4px; border-left: 1px solid #cfccc4; text-align: right; font-size: 11px; }
.facts tr:first-child td { font-size: 12px; }
.meter { height: 13px; color: #fff; line-height: 13px; }
.meter--blue { background: #0066cc; }
.meter--red { background: #ff3300; }

/* Community */
.forum { flex: 1; min-width: 0; padding: 1px 0 0 1px; }
.forum h3 {
  display: flex;
  align-items: center;
  justify-content: center;
  gap: 3px;
  height: 32px;
  padding: 0 0 6px 14px;
  background: linear-gradient(#5187d8, #82b8e2);
  color: #fff;
  font-size: 13px;
  font-weight: bold;
}
.forum h3 .i16 { margin-top: 6px; }
.forum p {
  display: flex;
  align-items: center;
  height: 24px;
  margin: 0 4px 1px 6px;
  padding-left: 5px;
  border-bottom: 1px dashed #b8b8c8;
  color: #204060;
  white-space: nowrap;
}
.forum a { color: #06639a; text-decoration: none; }
.forum em { color: #1a8a1a; font-style: normal; }
.rank { width: 12px; height: 12px; margin-right: 6px; border-radius: 3px; background: #f49a20; color: #fff; font-size: 9px; line-height: 12px; text-align: center; }

/* View tabs */
.view { display: flex; flex: 1; flex-direction: column; min-width: 0; border: 1px solid var(--line); border-bottom: 0; }
.tabs { display: flex; flex: none; height: 21px; padding: 2px 0 0 4px; border-bottom: 1px solid var(--shade); }
.tab {
  position: relative;
  height: 19px;
  padding: 0 5px 1px 6px;
  border-top: 1px solid var(--shade);
  border-right: 1px solid var(--shade);
  border-radius: 4px 4px 0 0;
}
.tab--first { padding-left: 21px; border-top: 0; padding-top: 1px; background: linear-gradient(var(--shade), var(--shade)) 20px 0 / 100% 1px no-repeat; }
.tab--first .slant { position: absolute; left: 3px; top: 0; }
.tab.is-active { z-index: 1; isolation: isolate; height: 20px; padding-bottom: 4px; background: var(--face); border-top-color: #fff; border-top-left-radius: 0; font-size: 13px; font-weight: bold; line-height: 15px; }
.tab.is-active .slant { position: absolute; left: -15px; top: -1px; z-index: -1; }
.slant { width: 18px; height: 20px; }
.pager { display: flex; gap: 8px; margin: 0 5px 0 auto; height: 13px; align-items: center; }
.pager svg { width: 6px; height: 9px; }

/* View toolbars */
.subbar { display: flex; flex: none; align-items: center; height: 27px; padding: 0 2px 0 4px; }
.subbar .vsep { width: 7px; height: 16px; align-self: center; margin: 0; }
.subbar--packets { padding: 1px 1px 0 4px; border-bottom: 1px solid var(--shade); height: 29px; }
.subbar--packets .vsep { width: 6px; }
.subbar .drop { width: 8px; height: 22px; }
.subbar .drop--tight { justify-content: flex-start; }
.subbar .drop--tight::before { margin-left: -2px; }
.tb { display: flex; align-items: center; justify-content: center; width: 22px; height: 22px; border: 1px solid transparent; }
.tb--text { width: auto; padding-left: 2px; gap: 1px; margin-right: 3px; }
.tb.is-on { border-color: #0a246a; background: #d6dcec; }
.subbar .vsep--end { margin-left: auto; }
.crumb { display: flex; margin-left: auto; height: 22px; background: #ececec; border: 1px solid #9aa8b8; line-height: 20px; white-space: nowrap; }
.vsep--end + .crumb { margin-left: 0; }
.crumb b { padding: 0 2px; font-size: 13px; }
.vsep--end + .crumb b { padding: 0 7px; }
.count { width: 20px; background: #fff; border-left: 1px solid #9aa8b8; text-align: center; font-size: 11px; }
.hex { width: 15px; height: 16px; border: 1px solid #5f8fd0; background: #e8f2ff; color: #2f68b8; font-size: 10px; line-height: 14px; text-align: center; }

/* Conversation view */
.split { display: flex; flex: 1; gap: 4px; min-height: 0; }
.layers { flex: 0 0 113px; padding: 4px 9px 0 10px; background: #fff; border: 1px solid var(--shade); border-width: 1px 1px 0 0; }
.layers h2 { margin: 0 -4px 4px; padding-bottom: 2px; border-bottom: 1px solid #b4b4b4; font-size: 13px; font-weight: bold; line-height: 17px; }
.layers button { display: flex; flex-direction: column; align-items: center; gap: 2px; width: 100%; height: 52px; padding-top: 2px; border: 1px solid transparent; line-height: 14px; }
.layers .is-active { background: #8491b8; border-color: #0a246a; }
.data { display: flex; flex: 1; flex-direction: column; min-width: 0; gap: 3px; }
.upper { display: flex; flex: 322; flex-direction: column; min-height: 0; background: #fff; border: 1px solid var(--shade); border-right: 0; }
.lower { display: flex; flex: 176; flex-direction: column; min-height: 0; border: 1px solid var(--shade); border-width: 1px 0 0 1px; }
.gridbox { flex: 1; min-width: 0; min-height: 0; overflow: hidden; background: #fff; }

.grid { width: 100%; border-collapse: separate; border-spacing: 0; table-layout: fixed; background: #fff; }
.grid th, .grid td { height: 17px; padding: 0 5px; border-right: 1px solid #c8c5be; border-bottom: 1px solid #c8c5be; line-height: 16px; font-size: 11px; text-align: left; white-space: nowrap; overflow: hidden; }
.grid th { background: var(--face); border-color: var(--shade); font-size: 12px; font-weight: normal; }
.grid .num { text-align: right; padding-right: 6px; }
.grid th.cut { padding-left: 10px; }
.grid tr > :last-child { border-right: 0; }
.grid--diag { border-top: 1px solid var(--shade); }
.grid--diag th { padding: 1px 9px 0; }
.c-name { width: 349px; }
.c-count { width: 151px; }
.is-selected td { background: #a6add2; border-color: #8890b8; color: #101c50; }
.w1 { width: 120px; }
.w2 { width: 110px; }
.w3, .w4 { width: 80px; }
.w5 { width: 50px; }
.w6 { width: 83px; }
.w7 { width: 97px; }
.grid--pkt td { font-family: "Liberation Mono", monospace; font-size: 12px; }
.p1 { width: 61px; }
.p2 { width: 127px; }
.p3 { width: 133px; }
.p5 { width: 60px; }
.p6 { width: 42px; }

.packet-tabs { display: flex; flex: none; height: 23px; padding: 4px 0 0 22px; background: linear-gradient(var(--face), #eceae6); border-bottom: 1px solid var(--shade); }
.packet-tabs button { position: relative; display: flex; align-items: center; gap: 3px; height: 19px; padding: 0 4px 0 2px; background: var(--face); border-top: 1px solid var(--shade); border-right: 1px solid var(--shade); border-radius: 0 3px 0 0; }
.packet-tabs .slant { position: absolute; left: -17px; top: -1px; }
.overflow--more { margin-left: auto; height: 25px; }
```
